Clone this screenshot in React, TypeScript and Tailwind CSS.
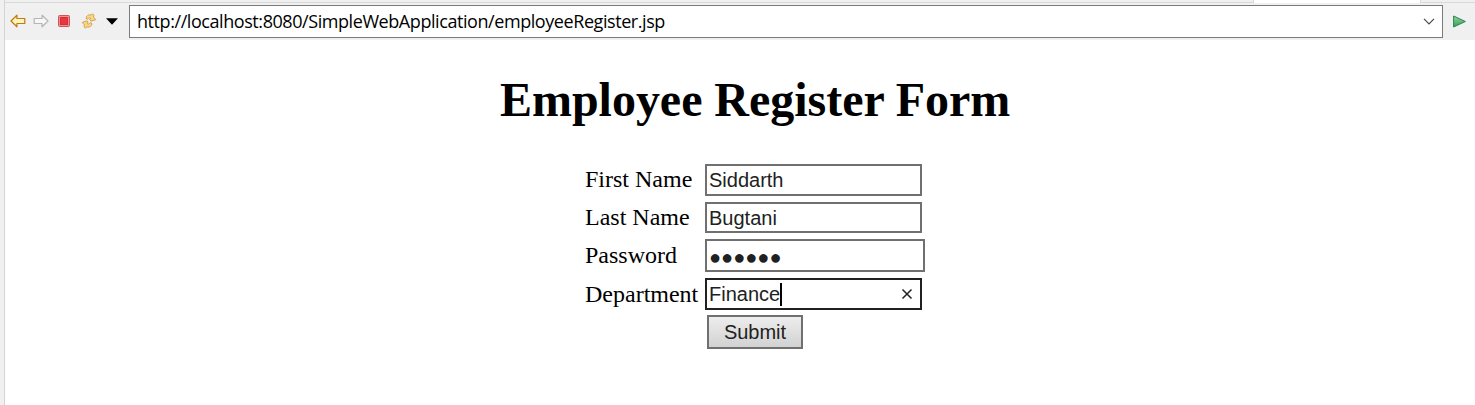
import type { ReactNode } from "react";

const fieldBase =
  "flex items-center border-2 bg-white pl-[2px] font-['Liberation_Sans',Arial,sans-serif] text-[20px] leading-none text-[#212121]";

function Row({ label, className, children }: { label: string; className: string; children: ReactNode }) {
  return (
    <div className={`flex items-center ${className}`}>
      <label className="w-[120px] shrink-0 whitespace-nowrap text-[24px] leading-[30px]">{label}</label>
      {children}
    </div>
  );
}

function Toolbar() {
  return (
    <div className="flex h-[37px] items-start bg-[#f0f0f0]">
      <div className="flex h-[36px] w-[124px] shrink-0 items-center pl-[5px]">
        <svg width="16" height="14" viewBox="0 0 16 14" aria-label="Back">
          <path d="M1 7 6.9 1.2V4.5H14.8V9.5H6.9V12.8Z" fill="#fff3bf" stroke="#bd7b14" strokeWidth="1.2" strokeLinejoin="round" />
        </svg>
        <svg className="ml-[7px]" width="16" height="14" viewBox="0 0 16 14" aria-label="Forward">
          <path d="M15 7 9.1 1.2V4.5H1.2V9.5H9.1V12.8Z" fill="#f7f7f7" stroke="#b5b5b5" strokeWidth="1.2" strokeLinejoin="round" />
        </svg>
        <svg className="ml-[9px]" width="12" height="12" viewBox="0 0 12 12" aria-label="Stop">
          <rect x=".5" y=".5" width="11" height="11" rx="1" fill="#f09094" stroke="#cc5357" />
          <rect x="2.5" y="2.5" width="7" height="7" fill="#e63742" stroke="#d62f39" />
        </svg>
        <svg className="ml-[11px]" width="16" height="16" viewBox="0 0 16 16" aria-label="Refresh">
          <path d="M5 5.4C5.2 2.7 7.6 1.2 10.4 2L11.6.8 12.9 2.2 12.6 4.2 14.8 6.6 9.9 8.2 8.9 6.8 9.7 5.2C8.6 4.5 7.4 4.9 6.8 6.3Z" fill="#f9d783" stroke="#c99336" strokeWidth=".8" strokeLinejoin="round" />
          <path d="M11 10.6C10.8 13.3 8.4 14.8 5.6 14L4.4 15.2 3.1 13.8 3.4 11.8 1.2 9.4 6.1 7.8 7.1 9.2 6.3 10.8C7.4 11.5 8.6 11.1 9.2 9.7Z" fill="#f9d783" stroke="#c99336" strokeWidth=".8" strokeLinejoin="round" />
        </svg>
        <svg className="ml-[9px]" width="12" height="7" viewBox="0 0 12 7" aria-label="History">
          <path d="M0 .3H12L6 6.7Z" fill="#000" />
        </svg>
      </div>
      <div className="mt-[2px] flex h-[33px] w-[1314px] shrink-0 items-center justify-between border border-[#7a7a7a] bg-white pr-[7px] pl-[7px]">
        <span className="pb-[2px] whitespace-nowrap font-['Open_Sans','Noto_Sans',sans-serif] text-[18px] leading-[24px] tracking-[-0.43px] text-black">
          http://localhost:8080/SimpleWebApplication/employeeRegister.jsp
        </span>
        <svg width="12" height="7" viewBox="0 0 12 7" aria-label="Open list">
          <path d="M1 .8 6 5.8 11 .8" fill="none" stroke="#484848" strokeWidth="1.2" />
        </svg>
      </div>
      <svg className="mt-[12px] ml-[10px]" width="13" height="13" viewBox="0 0 13 13" aria-label="Go">
        <defs>
          <linearGradient id="go" x2="0" y2="1">
            <stop stopColor="#9ad28d" />
            <stop offset="1" stopColor="#329e60" />
          </linearGradient>
        </defs>
        <path d="M.6 1V12L12.4 6.5Z" fill="url(#go)" stroke="#278459" strokeLinejoin="round" />
      </svg>
    </div>
  );
}

export default function App() {
  return (
    <div className="flex h-[405px] w-[1475px] flex-col overflow-hidden bg-white font-['Liberation_Serif','Times_New_Roman',serif] text-black">
      <div className="flex h-full">
        <div className="w-[5px] shrink-0 border-r border-[#d4d4d4] bg-[#f0f0f0]" />
        <div className="flex w-[1470px] flex-col">
          <div className="flex h-[3px]">
            <div className="w-[1248px] border-b border-[#d9d9d9] bg-[#f0f0f0]" />
            <div className="w-[168px] border-x border-[#d9d9d9] bg-white" />
            <div className="w-[54px] border-b border-[#d9d9d9] bg-[#f0f0f0]" />
          </div>
          <Toolbar />
          <h1 className="mt-[32px] ml-[495px] whitespace-nowrap text-[48px] leading-[56px] font-bold tracking-[-0.03px]">Employee Register Form</h1>
          <form className="mt-[36px] ml-[580px] flex flex-col" onSubmit={(e) => e.preventDefault()}>
            <Row label="First Name" className="h-[32px] [&>label]:pb-[2px]">
              <div className={`${fieldBase} h-[32px] w-[217px] border-[#707070]`}>Siddarth</div>
            </Row>
            <Row label="Last Name" className="mt-[6px] h-[31px] [&>label]:pb-[2px]">
              <div className={`${fieldBase} h-[31px] w-[217px] border-[#707070]`}>Bugtani</div>
            </Row>
            <Row label="Password" className="mt-[6px] h-[33px] [&>label]:pb-[2px]">
              <div className={`${fieldBase} h-[33px] w-[220px] border-[#707070]`}>
                <span className="pt-[2px]">●●●●●●</span>
              </div>
            </Row>
            <Row label="Department" className="mt-[6px] h-[32px]">
              <div className={`${fieldBase} h-[32px] w-[217px] border-[#212121]`}>
                <span>Finance</span>
                <span className="h-[23px] w-[2px] shrink-0 bg-black" />
                <svg className="mr-[7px] ml-auto" width="12" height="12" viewBox="0 0 12 12" aria-label="Clear">
                  <path d="M1.5 1.5 10.5 10.5M10.5 1.5 1.5 10.5" stroke="#212121" strokeWidth="1.5" />
                </svg>
              </div>
            </Row>
            <button className="mt-[5px] ml-[122px] flex h-[34px] w-[96px] items-center justify-center border-2 border-[#707070] bg-linear-to-b from-[#ededed] to-[#d2d2d2] font-['Liberation_Sans',Arial,sans-serif] text-[20px] leading-none text-[#212121]">
              Submit
            </button>
          </form>
        </div>
      </div>
    </div>
  );
}
